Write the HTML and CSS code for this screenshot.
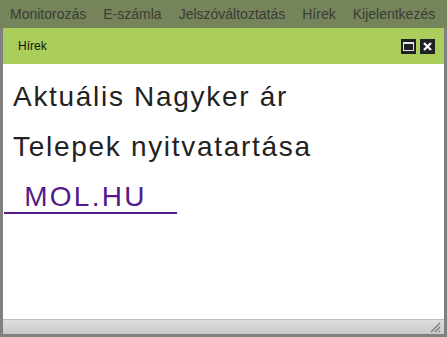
FILE: index.html
```html
<!DOCTYPE html>
<html lang="hu">
<head>
    <meta charset="UTF-8">
    <title>Hírek</title>
    <link rel="stylesheet" href="styles.css">
</head>
<body>
    <nav class="menu">
        <a href="#">Monitorozás</a>
        <a href="#">E-számla</a>
        <a href="#">Jelszóváltoztatás</a>
        <a href="#">Hírek</a>
        <a href="#">Kijelentkezés</a>
    </nav>

    <div class="window">
        <div class="window-header">
            <span class="window-title">Hírek</span>
            <div class="window-buttons">
                <button class="win-btn" title="Maximize"><span class="max-icon"></span></button>
                <button class="win-btn" title="Close">
                    <svg width="9" height="9" viewBox="0 0 9 9">
                        <path d="M1 1 L8 8 M8 1 L1 8" stroke="#fff" stroke-width="2.2"/>
                    </svg>
                </button>
            </div>
        </div>
        <div class="window-body">
            <p class="news-item">Aktuális Nagyker ár</p>
            <p class="news-item">Telepek nyitvatartása</p>
            <a class="news-link" href="#">&nbsp;&nbsp;MOL.HU&nbsp;&nbsp;&nbsp;</a>
        </div>
        <div class="window-status">
            <svg class="grip" width="12" height="12" viewBox="0 0 12 12">
                <path d="M11 2 L2 11 M11 6 L6 11 M11 10 L10 11" stroke="#777" stroke-width="1.3"/>
            </svg>
        </div>
    </div>
</body>
</html>
```

FILE: styles.css
```css
* {
    margin: 0;
    padding: 0;
    box-sizing: border-box;
}

body {
    background-color: #808080;
    font-family: 'Liberation Sans', Arial, sans-serif;
    height: 337px;
    overflow: hidden;
}

.menu {
    display: flex;
    gap: 17px;
    height: 28px;
    padding: 0 10px;
    align-items: center;
    background-color: #75845a;
}

.menu a {
    color: #3b3d36;
    font-size: 14px;
    text-decoration: none;
}

.window {
    margin: 0 3px;
    height: 306px;
    display: flex;
    flex-direction: column;
    background-color: white;
}

.window-header {
    display: flex;
    align-items: center;
    justify-content: space-between;
    height: 36px;
    padding: 0 9px 0 15px;
    background-color: #abcd5b;
}

.window-title {
    font-size: 12px;
    color: #111;
}

.window-buttons {
    display: flex;
    gap: 4px;
}

.win-btn {
    width: 15px;
    height: 15px;
    border: none;
    background-color: #1f2122;
    display: flex;
    align-items: center;
    justify-content: center;
}

.max-icon {
    width: 11px;
    height: 9px;
    border: 1px solid #e4e4e4;
    border-top-width: 2px;
}

.window-body {
    flex: 1;
    padding: 8px 0 0 10px;
}

.news-item {
    font-size: 28px;
    color: #222;
    line-height: 50px;
    letter-spacing: 1.7px;
}

.news-link {
    display: inline-block;
    margin-left: -9px;
    font-size: 28px;
    line-height: 50px;
    letter-spacing: 2.3px;
    color: #551a8b;
    text-decoration: underline;
    text-decoration-thickness: 2px;
    text-underline-offset: 6px;
}

.window-status {
    height: 15px;
    display: flex;
    justify-content: flex-end;
    align-items: center;
    padding-right: 3px;
    border-top: 1px solid #bcbcbc;
    background: linear-gradient(#dedede, #c9c9c9);
}
```
